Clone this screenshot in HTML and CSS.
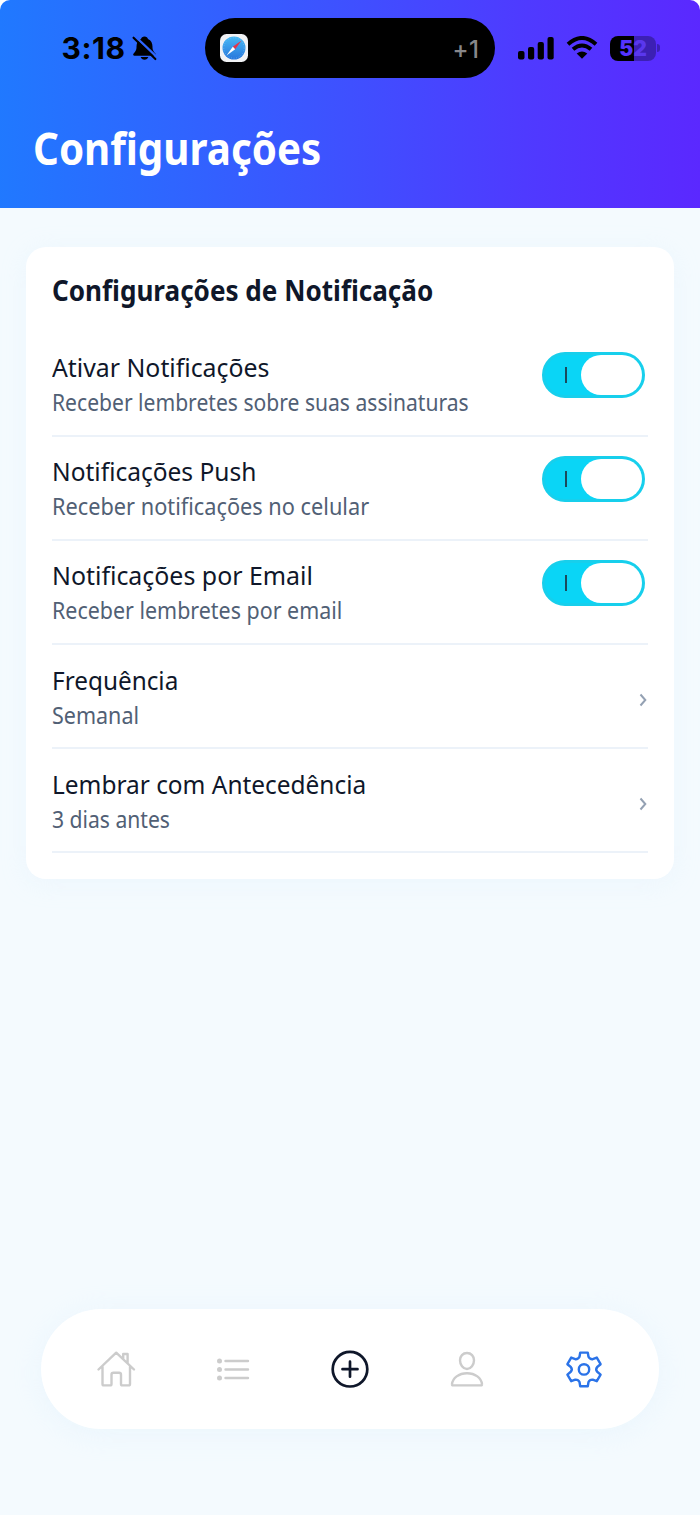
FILE: index.html
```html
<!DOCTYPE html>
<html lang="pt-BR">
<head>
<meta charset="utf-8">
<title>Configurações</title>
<link rel="stylesheet" href="styles.css">
</head>
<body>
<div class="screen">
  <header class="header">
    <div class="status">
      <div class="clock"><span class="time">3:18</span>
        <svg class="bell" viewBox="0 0 26 26"><path d="M13 1c-2 0-3.300 1.200-3.600 2.600C6 5 4.700 8 4.700 11.500c0 4-1 5-3 7.200-1 1.300-.4 2.300.9 2.300h20.800c1.300 0 1.900-1 .9-2.300-2-2.200-3-3.200-3-7.200 0-3.500-1.300-6.500-4.700-7.900C16.300 2.200 15 1 13 1zM9 22.400c.5 1.700 2 2.700 4 2.700s3.500-1 4-2.700z"/><path class="bell-gap" d="M3.200.8 26 22.600"/><path class="bell-slash" d="M1.600 2.300 24.300 24.500"/></svg>
      </div>
      <div class="island">
        <svg class="safari" viewBox="0 0 28 28"><defs><linearGradient id="dial" x2="0" y2="1"><stop stop-color="#48b9f5"/><stop offset="1" stop-color="#2676dc"/></linearGradient></defs><rect width="28" height="28" rx="6.500" fill="#f1f2f5"/><circle cx="14" cy="14" r="11.500" fill="url(#dial)"/><circle cx="14" cy="14" r="10.200" fill="none" stroke="#8dc9f5" stroke-width=".8" stroke-dasharray=".6 2"/><path d="M21.500 6.500 12.800 12.800l2.400 2.400z" fill="#e5354b"/><path d="M6.500 21.500l6.300-8.700 2.400 2.400z" fill="#fff"/></svg>
        <span class="more">+1</span>
      </div>
      <div class="indicators">
        <svg class="signal" viewBox="0 0 36 23"><rect y="14" width="6.500" height="8.500" rx="2"/><rect x="10" y="10" width="6.200" height="12.500" rx="2"/><rect x="19.700" y="5" width="6.200" height="17.500" rx="2"/><rect x="29.500" width="6.200" height="22.500" rx="2"/></svg>
        <svg class="wifi" viewBox="0 0 32 24"><path d="M2 8.200Q16-4.200 30 8.200M7 13.300q9-7.600 18 0" /><path class="wifi-dot" d="M10.700 17.500q5.300-4.200 10.600 0L16 22.700z"/></svg>
        <div class="battery"><span class="level"><b>5</b><b class="dim">2</b></span><i class="cap"></i></div>
      </div>
    </div>
    <h1 class="title"><span class="fit">Configurações</span></h1>
  </header>

  <main class="content">
    <section class="card">
      <h2 class="card-title"><span class="fit">Configurações de Notificação</span></h2>
      <div class="row enable"><div class="texts"><div class="label"><span class="fit">Ativar Notificações</span></div><div class="hint"><span class="fit">Receber lembretes sobre suas assinaturas</span></div></div><div class="switch"><i class="mark"></i><i class="knob"></i></div></div>
      <div class="row push"><div class="texts"><div class="label"><span class="fit">Notificações Push</span></div><div class="hint"><span class="fit">Receber notificações no celular</span></div></div><div class="switch"><i class="mark"></i><i class="knob"></i></div></div>
      <div class="row email"><div class="texts"><div class="label"><span class="fit">Notificações por Email</span></div><div class="hint"><span class="fit">Receber lembretes por email</span></div></div><div class="switch"><i class="mark"></i><i class="knob"></i></div></div>
      <div class="row frequency"><div class="texts"><div class="label"><span class="fit">Frequência</span></div><div class="hint"><span class="fit">Semanal</span></div></div><svg class="chevron" viewBox="0 0 8 14"><path d="M1.500 1.500 6.300 7 1.500 12.500"/></svg></div>
      <div class="row advance"><div class="texts"><div class="label"><span class="fit">Lembrar com Antecedência</span></div><div class="hint"><span class="fit">3 dias antes</span></div></div><svg class="chevron" viewBox="0 0 8 14"><path d="M1.500 1.500 6.300 7 1.500 12.500"/></svg></div>
    </section>
  </main>

  <nav class="tabbar">
    <svg class="tab" viewBox="0 0 40 40"><path d="M2.500 20.500 20.200 3.700 38 20.500M6.500 17.500V35q0 1.400 1.400 1.400h6.200q1.400 0 1.400-1.400v-9.300q0-1.900 1.900-1.900h5.700q1.900 0 1.900 1.900V35q0 1.400 1.400 1.400h6.200q1.400 0 1.400-1.400V17.500M27.200 9.500V5h4.400v9"/></svg>
    <svg class="tab" viewBox="0 0 40 40"><path d="M12.500 12H35M12.500 20.500H35M12.500 29H35"/><g class="dots"><circle cx="6.500" cy="12" r="2.500"/><circle cx="6.500" cy="20.500" r="2.500"/><circle cx="6.500" cy="29" r="2.500"/></g></svg>
    <svg class="tab add" viewBox="0 0 40 40"><circle cx="20" cy="20.200" r="17.300"/><path d="M20 12.700v15M12.500 20.200h15"/></svg>
    <svg class="tab" viewBox="0 0 40 40"><path d="M20 4c4.200 0 7 3.200 7 7.300 0 4.400-3 8.700-7 8.700s-7-4.300-7-8.700C13 7.200 15.800 4 20 4zM20 24.200c8.200 0 14.400 4.800 15 11 .1.800-.3 1.200-1 1.200H6c-.7 0-1.100-.4-1-1.200.6-6.200 6.800-11 15-11z"/></svg>
    <svg class="tab active" viewBox="-20 -20.400 40 40"><path d="M-3.800-16.800H3.800L4.500-12.600Q5.700-10 8.700-10.200L12.800-11.800 16.600-5.200 13.200-2.400Q11.200 0 13.200 2.400L16.600 5.200 12.800 11.800 8.700 10.200Q5.700 10 4.500 12.600L3.800 16.800H-3.800L-4.500 12.600Q-5.700 10-8.700 10.200L-12.800 11.800-16.600 5.200-13.200 2.400Q-11.200 0-13.200-2.400L-16.600-5.200-12.800-11.800-8.700-10.200Q-5.700-10-4.500-12.600z"/><circle r="5.200"/></svg>
  </nav>
</div>
</body>
</html>
```
FILE: styles.css
```css
* { box-sizing: border-box; }
body { margin: 0; background: #fff; font-family: "Noto Sans", "Open Sans", sans-serif; color: #0f172a; }
.screen { width: 700px; height: 1515px; display: flex; flex-direction: column; background: #f4fafe; border-radius: 10px 10px 0 0; overflow: hidden; }
.header { height: 207.500px; background: linear-gradient(91deg, #2079ff 0%, #2f65ff 25%, #3f50ff 50%, #4f3aff 75%, #5b28ff 100%); }
.status { height: 96px; display: grid; grid-template-columns: 205px 290px 205px; align-items: center; color: #000; }
.clock { display: flex; align-items: center; padding-left: 61.500px; gap: 6px; }
.time { font: 700 30px/30px Inter, sans-serif; letter-spacing: .6px; }
.bell { width: 25px; height: 26px; }
.bell-gap { stroke: #2e66ff; stroke-width: 2.500; }
.bell-slash { stroke: #000; stroke-width: 2.200; stroke-linecap: round; }
.island { height: 60px; border-radius: 30px; background: #000; display: flex; align-items: center; justify-content: space-between; padding: 0 15.500px 0 15px; }
.safari { width: 28px; height: 28px; }
.more { font: 500 24px/30px Inter, sans-serif; letter-spacing: .5px; color: #87878a; padding-top: 3px; }
.indicators { display: flex; align-items: center; padding-left: 23px; gap: 12px; }
.signal { width: 36px; height: 23px; }
.wifi { width: 32px; height: 24px; fill: none; stroke: #000; stroke-width: 4; }
.wifi-dot { fill: #000; stroke: none; }
.battery { display: flex; align-items: center; gap: 1px; }
.level { width: 46px; height: 25px; border-radius: 8px; background: linear-gradient(90deg, #000 24px, #3c20b4 24px); display: flex; justify-content: center; align-items: center; color: #5433ff; font: 700 21px/25px Inter, sans-serif; }
.dim { color: #5a37ee; }
.cap { width: 3px; height: 8px; border-radius: 0 4px 4px 0; background: #3c20b4; }
.fit { display: inline-block; white-space: nowrap; transform: scaleX(var(--fit)); transform-origin: 0 50%; }
.title { --fit: .916; margin: 22px 0 0 33px; font-size: 44px; line-height: 60px; font-weight: 700; color: #fff; }
.content { padding: 39.500px 26px 0; flex: 1; }
.card { height: 632px; background: #fff; border-radius: 20px; padding: 25px 26px 0; box-shadow: 0 4px 24px #d8f0fb44; }
.card-title { --fit: .932; margin: 0 0 24.500px; font-size: 28px; line-height: 36px; font-weight: 700; }
.row { height: 104.200px; border-bottom: 2px solid #ecf2f9; display: flex; justify-content: space-between; padding-top: 16.500px; }
.label { font-size: 26px; line-height: 36px; }
.hint { font-size: 23px; line-height: 34px; color: #516075; }
.enable .label { --fit: .955; }
.enable .hint { --fit: .917; }
.push .label { --fit: .943; }
.push .hint { --fit: .945; }
.email .label { --fit: .958; }
.email .hint { --fit: .932; }
.frequency .label { --fit: .936; }
.frequency .hint { --fit: .935; }
.advance .label { --fit: .939; }
.advance .hint { --fit: .918; }
.switch { width: 103px; height: 46px; margin: 3px 3px 0 0; border-radius: 23px; background: #0ad5f6; border: 3px solid #17cfec; display: flex; align-items: center; justify-content: space-between; padding-left: 20px; }
.mark { width: 2px; height: 16px; background: #1b4a5c; }
.knob { width: 61px; height: 40px; border-radius: 20px; background: #fff; }
.chevron { width: 8px; height: 14px; margin: 31px 1px 0 0; fill: none; stroke: #94a1b3; stroke-width: 2; }
.tabbar { width: 618px; height: 120px; margin: 0 auto 86px; border-radius: 60px; background: #fff; box-shadow: 0 4px 30px #d8f0fb55; display: flex; align-items: center; justify-content: space-between; padding: 0 55px 0 55px; }
.tab { width: 40px; height: 40px; fill: none; stroke: #ccc; stroke-width: 2.400; stroke-linecap: round; stroke-linejoin: round; }
.dots { fill: #ccc; stroke: none; }
.add { stroke: #0f172a; stroke-width: 2.700; }
.active { stroke: #2b73e8; stroke-width: 2.400; }
```
